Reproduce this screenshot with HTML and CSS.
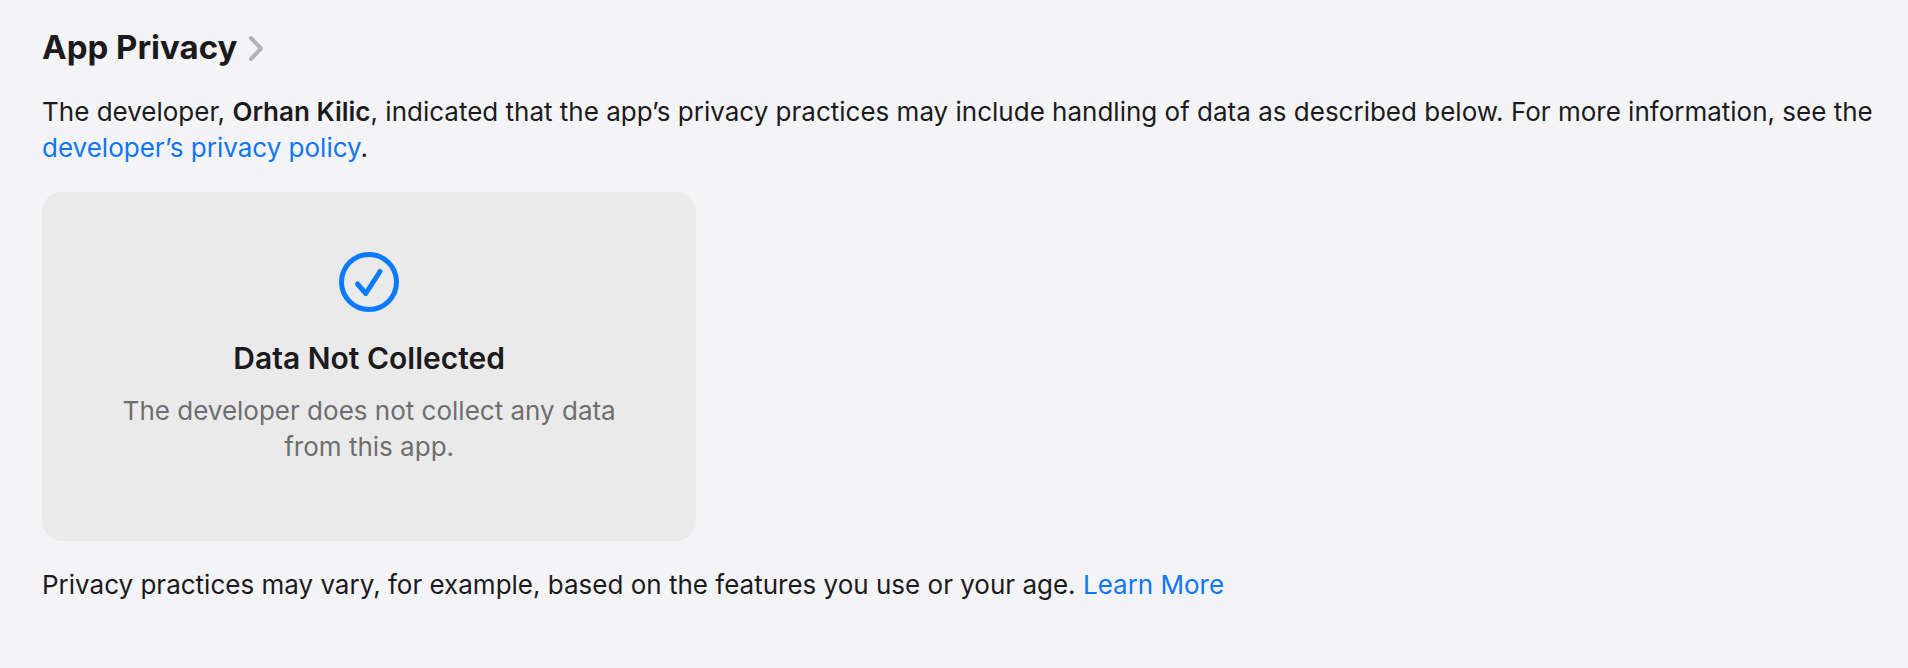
FILE: index.html
```html
<!DOCTYPE html>
<html lang="en">
<head>
<meta charset="utf-8">
<title>App Privacy</title>
<link rel="stylesheet" href="styles.css">
</head>
<body>
<section class="privacy">
  <h2 class="title"><a class="title-link" href="#details">App Privacy
    <svg class="chevron" viewBox="0 0 16 26" aria-hidden="true"><path d="M3 4l10 10.500L3 25"/></svg></a></h2>
  <p class="text">The developer, <strong>Orhan Kilic</strong>, indicated that the app’s privacy practices may include handling of data as described below. For more information, see the <a href="#policy">developer’s privacy policy</a>.</p>
  <article class="card">
    <svg class="check" viewBox="0 0 60 60" aria-hidden="true"><circle cx="30" cy="30" r="27.5"/><path d="M18.500 32l8.300 9.500L41 19.500"/></svg>
    <h3 class="card-title">Data Not Collected</h3>
    <p class="card-text">The developer does not collect any data from this app.</p>
  </article>
  <p class="text">Privacy practices may vary, for example, based on the features you use or your age. <a href="#learn">Learn More</a></p>
</section>
</body>
</html>
```
FILE: styles.css
```css
* { box-sizing: border-box; }
body {
  margin: 0;
  background: #f4f4f7;
  color: #1b1b1d;
  font-family: Inter, "Liberation Sans", sans-serif;
}
h2, h3, p { margin: 0; }
a { color: #0f76f5; text-decoration: none; }
strong { font-weight: 600; }
.privacy { padding: 26px 28px 26px 42px; }
.title { font-size: 33px; line-height: 42px; font-weight: 700; margin-bottom: 26px; }
.title-link { display: inline-flex; align-items: center; gap: 11px; color: inherit; }
.chevron { width: 16px; height: 26px; fill: none; stroke: #b3b3b6; stroke-width: 4; stroke-linecap: round; stroke-linejoin: round; overflow: visible; }
.text { font-size: 26px; line-height: 36px; }
.card {
  display: flex;
  flex-direction: column;
  align-items: center;
  width: 35.6%;
  margin: 26px 0;
  padding: 60px 80px 76px;
  border-radius: 20px;
  background: #eaeaea;
  text-align: center;
}
.check { width: 60px; height: 60px; fill: none; stroke: #0a7aff; stroke-width: 5; stroke-linecap: round; stroke-linejoin: round; }
.card-title { margin: 26px 0 15px; font-size: 30px; line-height: 40px; font-weight: 600; }
.card-text { font-size: 26px; line-height: 36px; color: #6e6e70; }
```
